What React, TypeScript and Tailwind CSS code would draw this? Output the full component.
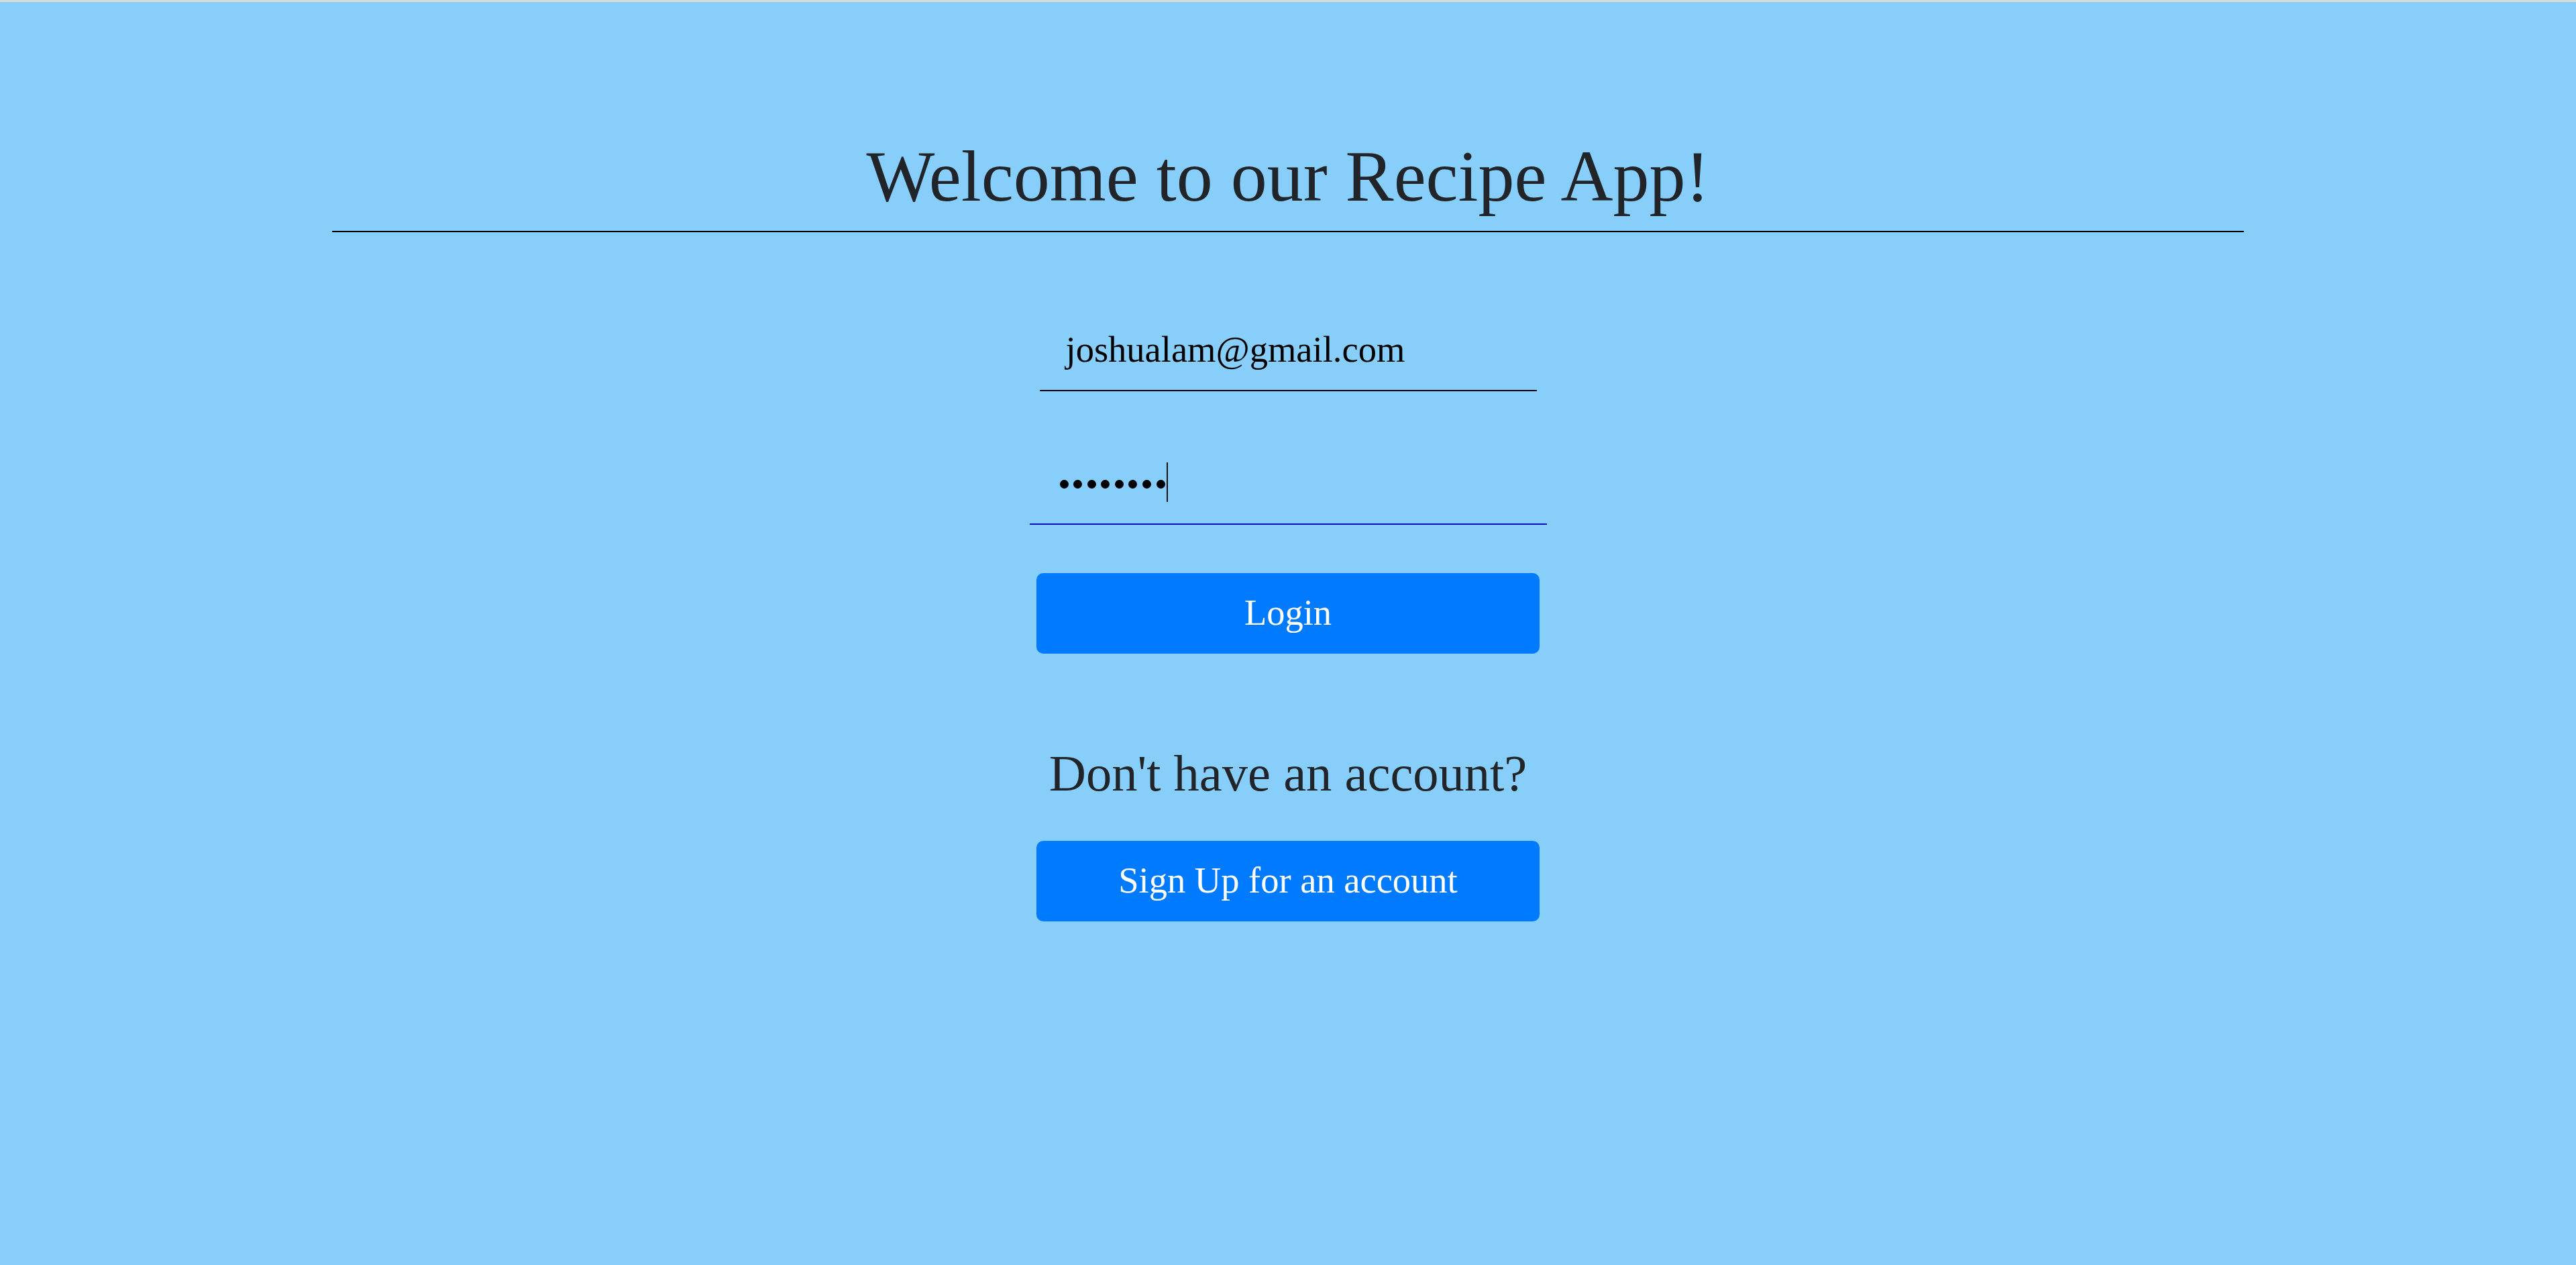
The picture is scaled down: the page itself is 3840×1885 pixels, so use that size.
import React from "react";

const serif = { fontFamily: '"Liberation Serif", "Times New Roman", serif' };

export default function App() {
  return (
    <div className="min-h-[1885px] w-full bg-[#87cefa]" style={serif}>
      <div className="h-[3px] w-full bg-[#d9d9d9]" />
      <div className="flex flex-col items-center pt-[196px]">
        <h1 className="text-[108px] leading-[128px] font-normal text-[#212529] text-center">
          Welcome to our Recipe App!
        </h1>
        <div className="mt-[17px] h-[2px] w-[2850px] bg-black" />

        {/* Email field */}
        <div className="mt-[143px] w-[741px] border-b-2 border-black pl-[39px] pb-[28px]">
          <div className="text-[54.5px] leading-[64px] text-black">joshualam@gmail.com</div>
        </div>

        {/* Password field (focused) */}
        <div className="mt-[103px] w-[771px] border-b-2 border-[#0b0bcc] pl-[45px] pb-[30px]">
          <div className="flex h-[64px] items-center">
            <div className="flex items-center gap-[7.6px] translate-y-[3px]">
              {Array.from({ length: 8 }).map((_, i) => (
                <span key={i} className="block h-[13px] w-[13px] rounded-full bg-black" />
              ))}
            </div>
            <span className="ml-[2px] block h-[59px] w-[2px] bg-[#111]" />
          </div>
        </div>

        <button className="mt-[72px] flex h-[120px] w-[750px] items-center justify-center rounded-[10px] bg-[#007bff] pb-[3px] text-[54.5px] leading-[64px] text-white">
          Login
        </button>

        <h3 className="mt-[135px] text-[76.5px] leading-[88px] font-normal text-[#212529] text-center">
          Don't have an account?
        </h3>

        <button className="mt-[56px] flex h-[120px] w-[750px] items-center justify-center rounded-[10px] bg-[#007bff] pb-[3px] text-[54.5px] leading-[64px] text-white">
          Sign Up for an account
        </button>
      </div>
    </div>
  );
}
